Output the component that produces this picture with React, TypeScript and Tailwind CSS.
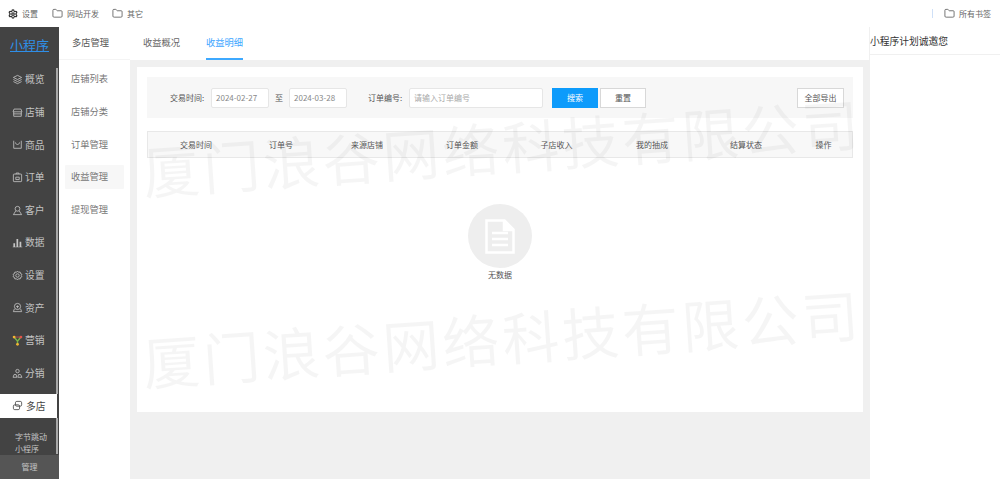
import { Folder, Settings } from "lucide-react";
import type { ReactNode } from "react";

const font = { fontFamily: '"Noto Sans CJK SC", "Liberation Sans", sans-serif' };

function Ico({ children }: { children: ReactNode }) {
  return (
    <svg width="11" height="11" viewBox="0 0 16 16" fill="none" stroke="currentColor" strokeWidth="1.2" className="shrink-0">
      {children}
    </svg>
  );
}

const menu: { label: string; icon: ReactNode }[] = [
  {
    label: "概览",
    icon: (
      <Ico>
        <path d="M8 2l6 3-6 3-6-3zM2 8l6 3 6-3M2 11l6 3 6-3" />
      </Ico>
    ),
  },
  {
    label: "店铺",
    icon: (
      <Ico>
        <path d="M3 3h10l1.500 4h-13zM2.500 7v6.500h11V7M2 10h12" />
      </Ico>
    ),
  },
  {
    label: "商品",
    icon: (
      <Ico>
        <path d="M2.500 2.500v11h11v-11M5 5c.5 4 5.500 4 6 0" />
      </Ico>
    ),
  },
  {
    label: "订单",
    icon: (
      <Ico>
        <rect x="2" y="3" width="12" height="11" rx="1" />
        <path d="M6 3V1.500h4V3M5.500 7.500v3.500h5V7.500z" />
      </Ico>
    ),
  },
  {
    label: "客户",
    icon: (
      <Ico>
        <circle cx="8" cy="5.500" r="3.500" />
        <path d="M5.500 8.500L2 14h12l-3.500-5.500" />
      </Ico>
    ),
  },
  {
    label: "数据",
    icon: (
      <svg width="11" height="11" viewBox="0 0 16 16" fill="currentColor" className="shrink-0">
        <path d="M1 14h14v1H1zM2 9h2.500v5H2zM6.500 3h2.500v11H6.500zM11 7h2.500v7H11z" />
      </svg>
    ),
  },
  {
    label: "设置",
    icon: (
      <Ico>
        <circle cx="8" cy="8" r="2.500" />
        <path d="M8 1.500l1.500 1.800 2.300-.4.6 2.300 2.100 1-1 1.800 1 1.800-2.100 1-.6 2.300-2.300-.4L8 14.500l-1.500-1.800-2.300.4-.6-2.300-2.100-1 1-1.800-1-1.800 2.100-1 .6-2.300 2.300.4z" />
      </Ico>
    ),
  },
  {
    label: "资产",
    icon: (
      <Ico>
        <circle cx="8" cy="6.500" r="4.500" />
        <path d="M6 6.500h4M8 5v4M3.500 10L2 14h12l-1.500-4" />
      </Ico>
    ),
  },
  {
    label: "营销",
    icon: (
      <svg width="11" height="11" viewBox="0 0 16 16" fill="none" className="shrink-0">
        <path d="M3 3l5 6 5-6M8 9v5" stroke="#7ab648" strokeWidth="2" />
        <path d="M3 3h10" stroke="#e0544a" strokeWidth="1" />
        <circle cx="3" cy="3" r="2" fill="#f2b632" />
        <circle cx="13" cy="3" r="2" fill="#e0544a" />
        <circle cx="8" cy="13.500" r="2" fill="#f2b632" />
      </svg>
    ),
  },
  {
    label: "分销",
    icon: (
      <Ico>
        <circle cx="8" cy="4.500" r="2.500" />
        <path d="M1.500 13.500l1.500-4h3l1 4zM8.500 13.500l1-4h3l2 4z" />
      </Ico>
    ),
  },
];

const subMenu = ["店铺列表", "店铺分类", "订单管理", "收益管理", "提现管理"];

const columns = ["交易时间", "订单号", "来源店铺", "订单金额", "子店收入", "我的抽成", "结算状态", "操作"];

function Bookmark({ label }: { label: string }) {
  return (
    <div className="flex items-center gap-[4px]">
      <Folder size={11} strokeWidth={1.6} className="text-[#444]" />
      <span>{label}</span>
    </div>
  );
}

function DateInput({ value }: { value: string }) {
  return (
    <div className="flex h-[20px] w-[58px] items-center rounded-[2px] border border-[#e6e6e6] bg-white pl-[4px] text-[8px] text-[#888]">
      {value}
    </div>
  );
}

export default function App() {
  return (
    <div className="flex h-[479px] w-[1000px] flex-col overflow-hidden bg-white text-[#555]" style={font}>
      {/* bookmarks bar */}
      <div className="flex h-[27px] shrink-0 items-center pl-[8px] pr-[9px] text-[8px] text-[#666]">
        <div className="mr-[14px] flex items-center gap-[4px]">
          <Settings size={10} strokeWidth={3} className="text-[#333]" />
          <span>设置</span>
        </div>
        <div className="flex items-center gap-[13px]">
          <Bookmark label="网站开发" />
          <Bookmark label="其它" />
        </div>
        <div className="ml-auto flex items-center">
          <div className="mr-[11px] h-[9px] w-px bg-[#cfe0f7]" />
          <Bookmark label="所有书签" />
        </div>
      </div>

      <div className="flex min-h-0 flex-1">
        {/* main sidebar */}
        <div className="relative flex w-[59px] shrink-0 flex-col bg-[#434343] text-[9.750px] text-[#c4c4c4]">
          <div className="flex h-[36.500px] shrink-0 items-center justify-center pb-[1px] text-[13px] text-[#2f8fe8] underline">
            小程序
          </div>
          {menu.map((m) => (
            <div key={m.label} className="flex h-[32.6px] shrink-0 items-center gap-[2px] pl-[12px]">
              {m.icon}
              <span>{m.label}</span>
            </div>
          ))}
          <div className="mt-[4.500px] flex h-[24px] w-[57px] shrink-0 items-center gap-[3px] bg-white pl-[12px] text-[#444]">
            <Ico>
              <rect x="5" y="2" width="9" height="7" rx="2" />
              <rect x="2" y="7" width="9" height="7" rx="2" />
            </Ico>
            <span>多店</span>
          </div>
          <div className="mt-[13px] pl-[15px] text-[8px] leading-[12px]">
            字节跳动
            <br />
            小程序
          </div>
          <div className="mt-auto flex h-[25px] shrink-0 items-center justify-center bg-[#555] text-[8px]">管理</div>
          <div className="absolute right-[1px] top-[41px] h-[326px] w-[2px] bg-[#a9a9a9]" />
          <div className="absolute bottom-[25px] right-[1px] h-[36px] w-[2px] bg-[#a9a9a9]" />
        </div>

        {/* sub menu */}
        <div className="flex w-[71px] shrink-0 flex-col text-[9.250px]">
          <div className="flex h-[33px] shrink-0 items-center border-b border-[#f4f4f4] pb-[1px] pl-[13px] text-[#555]">
            多店管理
          </div>
          <div className="flex flex-col pl-[6px] pr-[6px] pt-[3px] text-[#777]">
            {subMenu.map((s) => (
              <div key={s} className="flex h-[32.6px] items-center">
                <div
                  className={
                    s === "收益管理"
                      ? "flex h-[24px] w-full items-center rounded-[1px] bg-[#f7f7f7] pl-[6px]"
                      : "flex h-[24px] w-full items-center pl-[6px]"
                  }
                >
                  {s}
                </div>
              </div>
            ))}
          </div>
        </div>

        {/* content */}
        <div className="flex w-[739px] shrink-0 flex-col bg-[#f0f0f0]">
          <div className="flex h-[33px] shrink-0 gap-[26px] bg-white pl-[13px] text-[9.250px]">
            <div className="flex items-center pb-[2px] text-[#666]">收益概况</div>
            <div className="flex items-center border-b-2 border-[#3ea9ff] text-[#3ea6ff]">收益明细</div>
          </div>
          <div className="relative ml-[7px] mt-[7px] h-[345px] w-[726px] overflow-hidden bg-white p-[10px]">
            <div className="flex h-[41px] items-center bg-[#f7f7f7] pl-[23px] pr-[9px] text-[8px] text-[#555]">
              <span className="mr-[7px] w-[34px] whitespace-nowrap">交易时间:</span>
              <DateInput value="2024-02-27" />
              <span className="mx-[6px]">至</span>
              <DateInput value="2024-03-28" />
              <span className="ml-[21px] mr-[7px] w-[34px] whitespace-nowrap">订单编号:</span>
              <div className="flex h-[20px] w-[134px] items-center rounded-[2px] border border-[#e6e6e6] bg-white pl-[4px] text-[#aaa]">
                请输入订单编号
              </div>
              <div className="ml-[9px] flex h-[20px] w-[46px] items-center justify-center bg-[#0d9bfb] text-white">搜索</div>
              <div className="ml-[2px] flex h-[20px] w-[46px] items-center justify-center border border-[#d8d8d8] bg-white">重置</div>
              <div className="ml-auto flex h-[20px] w-[47px] items-center justify-center border border-[#d8d8d8] bg-white">全部导出</div>
            </div>
            <div className="mt-[13px] grid h-[27px] grid-cols-[96px_74px_98px_92px_97px_94px_94px_61px] items-center border border-[#e8e8e8] bg-[#f8f8f8] text-center text-[8px] text-[#555]">
              {columns.map((c) => (
                <div key={c}>{c}</div>
              ))}
            </div>
            <div className="mt-[46px] flex flex-col items-center">
              <div className="flex h-[64px] w-[64px] items-center justify-center rounded-full bg-[#eeeeee]">
                <svg width="30" height="35" viewBox="0 0 30 35" fill="none" stroke="#fff" strokeWidth="2.500">
                  <path d="M1.500 1.500h18l9 9v23h-27z" />
                  <path d="M19 2v9h9" fill="#fff" />
                  <path d="M7 14h16M7 20h16M7 26h16" />
                </svg>
              </div>
              <div className="mt-[1px] text-[8px] leading-[12px] text-[#555]">无数据</div>
            </div>

            {/* watermark */}
            <div className="pointer-events-none absolute left-[5px] top-[43px] -rotate-[3.9deg] whitespace-nowrap text-[57px] leading-[70px] tracking-[3px] text-black/[0.04]">
              厦门浪谷网络科技有限公司
            </div>
            <div className="pointer-events-none absolute left-[5px] top-[234px] -rotate-[3.9deg] whitespace-nowrap text-[57px] leading-[70px] tracking-[3px] text-black/[0.04]">
              厦门浪谷网络科技有限公司
            </div>
          </div>
        </div>

        {/* right panel */}
        <div className="min-w-0 flex-1 border-l border-[#f0f0f0]">
          <div className="flex h-[28px] items-center border-b border-[#f0f0f0] pt-[1px] text-[9.750px] text-[#333]">
            小程序计划诚邀您
          </div>
        </div>
      </div>
    </div>
  );
}
